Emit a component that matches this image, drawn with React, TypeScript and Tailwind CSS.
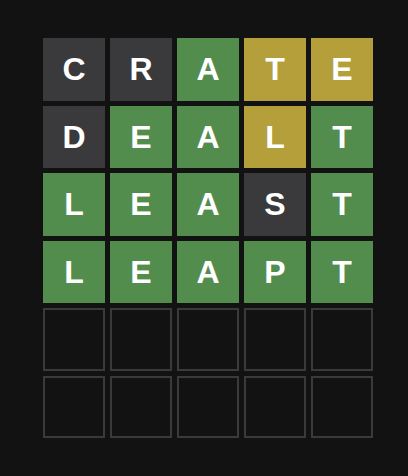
type Tile = { l: string; s: 'g' | 'y' | 'x' }

const rows: Tile[][] = [
    [{ l: 'C', s: 'x' }, { l: 'R', s: 'x' }, { l: 'A', s: 'g' }, { l: 'T', s: 'y' }, { l: 'E', s: 'y' }],
    [{ l: 'D', s: 'x' }, { l: 'E', s: 'g' }, { l: 'A', s: 'g' }, { l: 'L', s: 'y' }, { l: 'T', s: 'g' }],
    [{ l: 'L', s: 'g' }, { l: 'E', s: 'g' }, { l: 'A', s: 'g' }, { l: 'S', s: 'x' }, { l: 'T', s: 'g' }],
    [{ l: 'L', s: 'g' }, { l: 'E', s: 'g' }, { l: 'A', s: 'g' }, { l: 'P', s: 'g' }, { l: 'T', s: 'g' }],
]

const colors = {
    g: 'bg-[#538d4e]',
    y: 'bg-[#b59f3b]',
    x: 'bg-[#3a3a3c]',
}

const App = () => {
    const empty = Array.from({ length: 10 })
    return (
        <div className="min-h-screen bg-[#121213] pt-[38px] pl-[43px] font-['Liberation_Sans',Arial,sans-serif]">
            <div className="grid grid-cols-5 grid-rows-6 gap-[5px] w-[330px] h-[400px]">
                {rows.flat().map((t, i) => (
                    <div
                        key={i}
                        className={`flex items-center justify-center text-white font-bold text-[32px] ${colors[t.s]}`}
                    >
                        {t.l}
                    </div>
                ))}
                {empty.map((_, i) => (
                    <div key={'e' + i} className="border-2 border-[#3a3a3c]" />
                ))}
            </div>
        </div>
    )
}
export default App
